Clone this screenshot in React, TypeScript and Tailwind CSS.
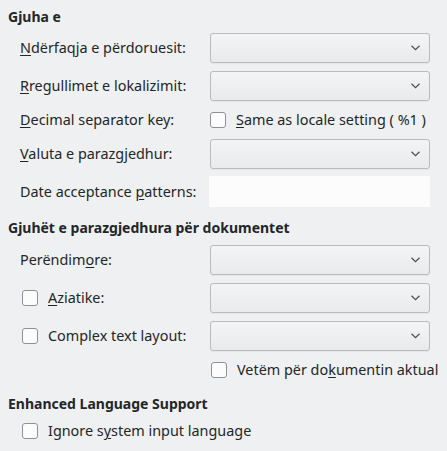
import React from 'react';

const font = { fontFamily: '"Noto Sans", sans-serif' };

const Chevron = () => (
  <svg width="9" height="6" viewBox="0 0 9 6" className="text-[#4d4d4d]">
    <polyline points="0.5,0.8 4.5,4.6 8.5,0.8" fill="none" stroke="currentColor" strokeWidth="1.2" />
  </svg>
);

const Combo = () => (
  <div className="flex h-[30px] w-[220px] items-center justify-end rounded-[3px] border border-[#babbbd] bg-gradient-to-b from-[#f3f4f5] to-[#e9eaeb] pr-[9px] shadow-[0_1px_0_rgba(0,0,0,0.04)]">
    <Chevron />
  </div>
);

const Box = () => (
  <span className="inline-block h-4 w-4 shrink-0 rounded-[3px] border border-[#8f9194] bg-[#fcfcfc]" />
);

const U = ({ c }: { c: string }) => <span className="underline underline-offset-2">{c}</span>;

const Row = ({ label, children }: { label: React.ReactNode; children: React.ReactNode }) => (
  <div className="flex items-center">
    <div className="w-[202px] shrink-0 pl-3">{label}</div>
    {children}
  </div>
);

const CheckRow = ({ label, className = '' }: { label: React.ReactNode; className?: string }) => (
  <div className={`flex h-[22px] items-center gap-[10px] ${className}`}>
    <Box />
    <span>{label}</span>
  </div>
);

export default function App() {
  return (
    <div style={font} className="h-[451px] w-[447px] bg-[#eff0f1] px-2 pt-2 text-[14.4px] leading-[18px] text-[#232629]">
      <div className="text-[14px] font-bold">Gjuha e</div>

      <div className="mt-[7px] flex flex-col gap-2">
        <Row label={<><U c="N" />dërfaqja e përdoruesit:</>}>
          <Combo />
        </Row>
        <Row label={<><U c="R" />regullimet e lokalizimit:</>}>
          <Combo />
        </Row>
        <Row label={<><U c="D" />ecimal separator key:</>}>
          <CheckRow label={<><U c="S" />ame as locale setting ( %1 )</>} />
        </Row>
        <Row label={<><U c="V" />aluta e parazgjedhur:</>}>
          <Combo />
        </Row>
      </div>

      <div className="mt-[7px]">
        <Row label={<>Date acceptance <U c="p" />atterns:</>}>
          <div className="h-[31px] w-[221px] -ml-px bg-[#fcfcfc]" />
        </Row>
      </div>

      <div className="mt-3 text-[14px] font-bold">Gjuhët e parazgjedhura për dokumentet</div>

      <div className="mt-2 flex flex-col gap-2">
        <Row label={<>Perëndim<U c="o" />re:</>}>
          <Combo />
        </Row>
        <div className="flex items-center">
          <div className="w-[202px] shrink-0 pl-[14px]">
            <CheckRow label={<><U c="A" />ziatike:</>} />
          </div>
          <Combo />
        </div>
        <div className="flex items-center">
          <div className="w-[202px] shrink-0 pl-[14px]">
            <CheckRow label="Complex text layout:" />
          </div>
          <Combo />
        </div>
        <div className="flex">
          <div className="w-[203px] shrink-0" />
          <CheckRow label={<>Vetëm për do<U c="k" />umentin aktual</>} />
        </div>
      </div>

      <div className="mt-[14px] text-[14px] font-bold">Enhanced Language Support</div>
      <div className="mt-[7px] pl-[14px]">
        <CheckRow label={<>Ignore s<U c="y" />stem input language</>} />
      </div>
    </div>
  );
}
